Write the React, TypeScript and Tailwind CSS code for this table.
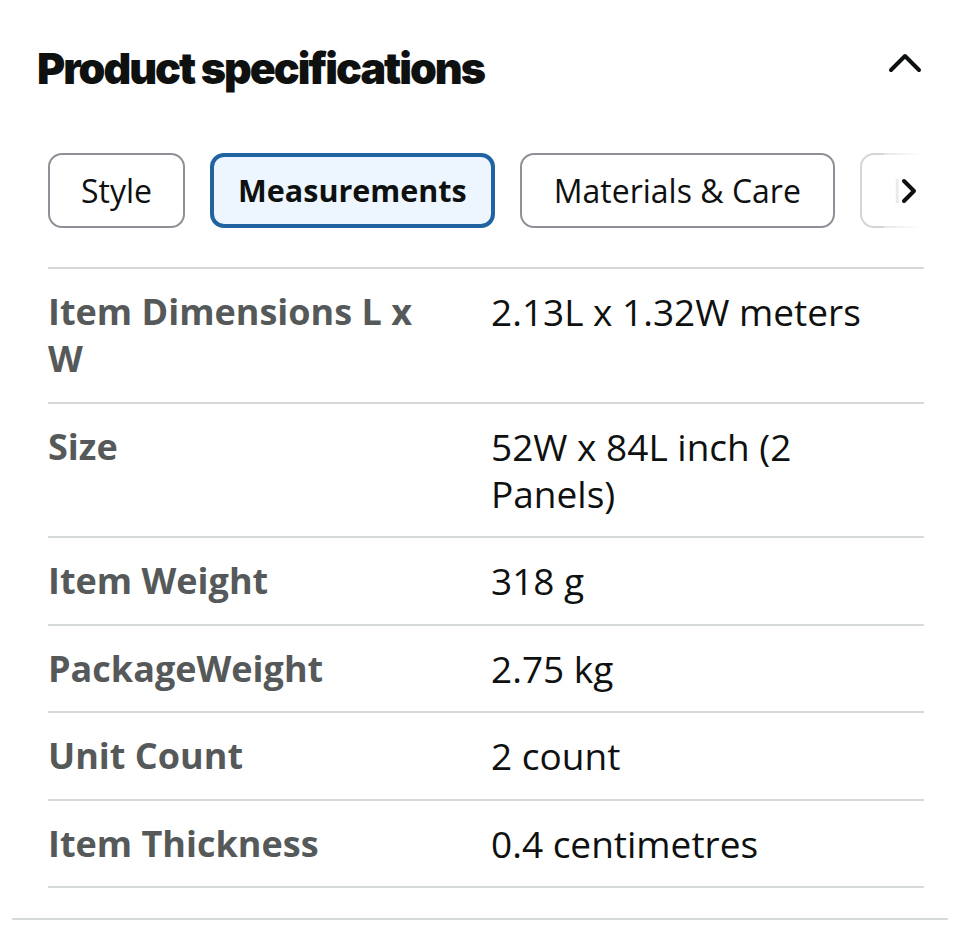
import React from "react";

const rows: { label: string; value: string }[] = [
  { label: "Item Dimensions L x W", value: "2.13L x 1.32W meters" },
  { label: "Size", value: "52W x 84L inch (2 Panels)" },
  { label: "Item Weight", value: "318 g" },
  { label: "PackageWeight", value: "2.75 kg" },
  { label: "Unit Count", value: "2 count" },
  { label: "Item Thickness", value: "0.4 centimetres" },
];

export default function App() {
  return (
    <div className="w-[960px] h-[949px] bg-white overflow-hidden" style={{ fontFamily: '"Open Sans", sans-serif' }}>
      <div className="flex items-center justify-between pl-[37px] pr-[38px] pt-[24px] h-[112px]">
        <h1
          className="text-[43px] font-black tracking-[-2px] text-[#0f1111] leading-none"
          style={{ fontFamily: 'Inter, sans-serif' }}
        >
          Product specifications
        </h1>
        <svg width="34" height="22" viewBox="0 0 34 22" fill="none" className="-mt-[12px]">
          <path d="M3 19 L17 5 L31 19" stroke="#0f1111" strokeWidth="4" strokeLinecap="round" strokeLinejoin="round" />
        </svg>
      </div>

      <div className="ml-[48px] mr-[40px] mt-[41px] flex gap-[25px] overflow-hidden relative">
        <div className="h-[75px] px-[31px] flex items-center rounded-[14px] border-2 border-[#8d9096] text-[32px] text-[#0f1111] shrink-0">
          Style
        </div>
        <div className="h-[75px] px-[24px] flex items-center rounded-[14px] border-[4px] border-[#2162a1] bg-[#edf6ff] text-[30.5px] font-bold text-[#0f1111] shrink-0">
          Measurements
        </div>
        <div className="h-[75px] px-[32px] flex items-center rounded-[14px] border-2 border-[#8d9096] text-[32px] text-[#0f1111] shrink-0">
          Materials &amp; Care
        </div>
        <div className="h-[75px] pl-[31px] w-[80px] flex items-center rounded-[14px] border-2 border-[#d5d5d5] text-[32px] text-[#c8c8c8] shrink-0 overflow-hidden">
          I
        </div>
        <div className="absolute right-0 top-0 h-[75px] w-[36px] bg-gradient-to-r from-white/40 to-white flex items-center justify-end pr-[2px]">
          <svg width="18" height="26" viewBox="0 0 18 26" fill="none">
            <path d="M4 3 L14 13 L4 23" stroke="#0f1111" strokeWidth="4" strokeLinecap="round" strokeLinejoin="round" />
          </svg>
        </div>
      </div>

      <div className="ml-[48px] mr-[36px] mt-[39px] border-t-2 border-[#d5d9d9]">
        {rows.map((r) => (
          <div key={r.label} className="grid grid-cols-[443px_1fr] border-b-2 border-[#d5d9d9] pt-[19px] pb-[19.5px]">
            <div className="text-[36px] leading-[47px] font-bold text-[#565959] pr-[40px]">{r.label}</div>
            <div className="text-[37px] leading-[47px] text-[#0f1111] pr-[40px]">{r.value}</div>
          </div>
        ))}
      </div>

      <div className="mx-[12px] mt-[30px] border-t-2 border-[#d5d9d9]" />
    </div>
  );
}
